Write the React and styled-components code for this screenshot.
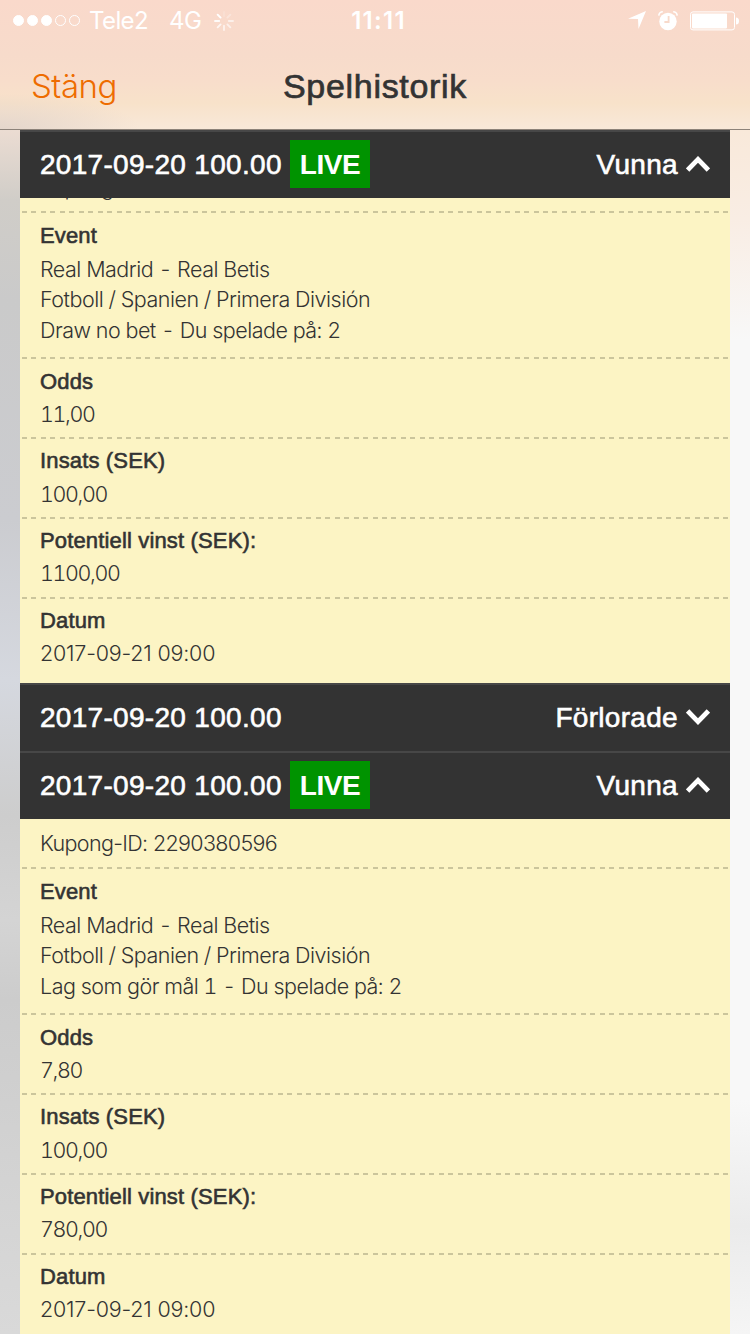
import React from 'react';
import styled, { createGlobalStyle } from 'styled-components';

const bets = [
  {
    id: 1,
    date: '2017-09-20',
    amount: '100.00',
    live: true,
    status: 'Vunna',
    open: true,
    scrolled: true,
    coupon: '2290380597',
    event: ['Real Madrid - Real Betis', 'Fotboll / Spanien / Primera División', 'Draw no bet - Du spelade på: 2'],
    odds: '11,00',
    stake: '100,00',
    win: '1100,00',
    placed: '2017-09-21 09:00',
  },
  {
    id: 2,
    date: '2017-09-20',
    amount: '100.00',
    live: false,
    status: 'Förlorade',
    open: false,
  },
  {
    id: 3,
    date: '2017-09-20',
    amount: '100.00',
    live: true,
    status: 'Vunna',
    open: true,
    coupon: '2290380596',
    event: ['Real Madrid - Real Betis', 'Fotboll / Spanien / Primera División', 'Lag som gör mål 1 - Du spelade på: 2'],
    odds: '7,80',
    stake: '100,00',
    win: '780,00',
    placed: '2017-09-21 09:00',
  },
];

function StatusIcons() {
  return (
    <Icons>
      <svg width="18" height="18" viewBox="0 0 18 18">
        <path d="M18 0 L10.5 18 L10 8 L0 7.8 Z" fill="#fff" />
      </svg>
      <svg width="20" height="20" viewBox="0 0 20 20">
        <circle cx="10" cy="10.5" r="8.7" fill="#fff" />
        <path d="M0.8 4.6 A4 4 0 0 1 4.8 0.8 M15.2 0.8 A4 4 0 0 1 19.2 4.6" stroke="#fff" strokeWidth="1.6" fill="none" />
        <path d="M10.6 5 V11 H6.4" stroke="#f8dacb" strokeWidth="1.8" fill="none" />
      </svg>
      <svg width="49" height="20" viewBox="0 0 49 20">
        <rect x="0.5" y="0.9" width="44" height="18" rx="2.5" stroke="#fff" fill="none" />
        <rect x="2" y="2.4" width="35" height="15" rx="0.8" fill="#fff" />
        <path d="M46 6.4 Q49 6.4 49 10 Q49 13.6 46 13.6 Z" fill="#fff" />
      </svg>
    </Icons>
  );
}

function Spinner() {
  const opacities = [0.15, 0.3, 0.6, 0.6, 0.65, 0.75, 0.9, 1];
  return (
    <svg width="20" height="20" viewBox="-10 -10 20 20">
      {opacities.map((opacity, i) => (
        <path
          key={i}
          d="M0 -4.8 V-9"
          stroke="#fff"
          strokeWidth="1.9"
          strokeLinecap="round"
          opacity={opacity}
          transform={`rotate(${i * 45})`}
        />
      ))}
    </svg>
  );
}

function Chevron({ up }) {
  return (
    <ChevronIcon width="24" height="16" viewBox="0 0 24 16">
      <path d={up ? 'M1.6 14 L12 3.4 L22.4 14' : 'M1.6 2 L12 12.6 L22.4 2'} stroke="#fff" strokeWidth="4.8" fill="none" />
    </ChevronIcon>
  );
}

function Field({ label, gap, children, ...rest }) {
  return (
    <Row {...rest}>
      <Label $gap={gap}>{label}</Label>
      {children}
    </Row>
  );
}

function Bet({ bet }) {
  return (
    <section>
      <BetHeader>
        <BetTitle>{bet.date} {bet.amount}</BetTitle>
        {bet.live && <Live>LIVE</Live>}
        <BetStatus>
          {bet.status}
          <Chevron up={bet.open} />
        </BetStatus>
      </BetHeader>
      {bet.open && (
        <Details>
          <Coupon $scrolled={bet.scrolled}>
            <CouponId>Kupong-ID: {bet.coupon}</CouponId>
          </Coupon>
          <Field label="Event" $height="146px" gap="2.5px">
            {bet.event.map(line => <Value key={line}>{line}</Value>)}
          </Field>
          <Field label="Odds"><Amount>{bet.odds}</Amount></Field>
          <Field label="Insats (SEK)" $top="7px" gap="4px"><Amount>{bet.stake}</Amount></Field>
          <Field label="Potentiell vinst (SEK):" $top="7px"><Amount>{bet.win}</Amount></Field>
          <Field label="Datum" $top="7px" $height="84px" $last><DateValue>{bet.placed}</DateValue></Field>
        </Details>
      )}
    </section>
  );
}

export default function App() {
  return (
    <Screen>
      <GlobalStyle />
      <TopBar>
        <StatusBar>
          <Carrier>
            <Dots>
              <Dot $full />
              <Dot $full />
              <Dot $full />
              <Dot />
              <Dot />
            </Dots>
            <Operator>Tele2</Operator>
            <Network>4G</Network>
            <Spinner />
          </Carrier>
          <Clock>11:11</Clock>
          <StatusIcons />
        </StatusBar>
        <NavBar>
          <CloseButton>Stäng</CloseButton>
          <Title>Spelhistorik</Title>
        </NavBar>
      </TopBar>
      <List>
        {bets.map(bet => <Bet key={bet.id} bet={bet} />)}
      </List>
    </Screen>
  );
}

const GlobalStyle = createGlobalStyle`
  * {
    box-sizing: border-box;
  }

  body {
    margin: 0;
    overflow: hidden;
  }

  svg {
    display: block;
    flex: none;
  }
`;

const Screen = styled.div`
  background:
    linear-gradient(180deg, #ebdcd2 130px, #d0cdc8 200px, #cacaca 300px, #cbccd0 520px, #d5d8df 680px, #cdcdcd 815px, #d4d4d4 920px, #cccccc 1000px, #d9d9d9 1334px) left / 375px 100% no-repeat,
    linear-gradient(180deg, #f9e9da 130px, #f9ede4 220px, #f8f8f8 340px, #f8f8f8 1100px, #ebebeb 1226px, #f5f5f5 1334px) right / 375px 100% no-repeat;
  color: #333;
  display: flex;
  flex-direction: column;
  font-family: 'Liberation Sans', Arial, sans-serif;
  height: 1334px;
  overflow: hidden;
  width: 750px;
`;

const TopBar = styled.header`
  background:
    radial-gradient(ellipse 140px 36px at 0 100%, rgba(226, 212, 202, 0.9), rgba(226, 212, 202, 0)),
    linear-gradient(180deg, #fad9cb 0, #f7dbcb 55px, #f8ddcb 80px, #f8e2ca 103px, #f8e8d9 129px);
  border-bottom: 1px solid #8c8279;
  flex: none;
  height: 130px;
`;

const StatusBar = styled.div`
  align-items: center;
  color: #fff;
  display: grid;
  font-family: Inter, sans-serif;
  font-size: 24px;
  grid-template-columns: 1fr auto 1fr;
  height: 41px;
  padding: 0 11px 0 13px;
`;

const Carrier = styled.div`
  align-items: center;
  display: flex;
`;

const Dots = styled.div`
  display: flex;
  gap: 3px;
  width: 76px;
`;

const Dot = styled.span`
  background: ${props => (props.$full ? '#fff' : 'transparent')};
  border: 1px solid #fff;
  border-radius: 50%;
  height: 11px;
  width: 11px;
`;

const Operator = styled.span`
  letter-spacing: -0.6px;
  width: 80px;
`;

const Network = styled.span`
  letter-spacing: -0.5px;
  width: 45px;
`;

const Clock = styled.span`
  font-kerning: none;
  font-weight: 600;
  letter-spacing: 1.3px;
  margin-left: 5px;
`;

const Icons = styled.div`
  display: flex;
  gap: 12px;
  justify-content: flex-end;
`;

const NavBar = styled.div`
  align-items: center;
  display: grid;
  font-size: 34px;
  grid-template-columns: 1fr auto 1fr;
  height: 88px;
  padding: 2px 31px 0;
`;

const CloseButton = styled.button`
  background: none;
  border: 0;
  color: #ee6c00;
  font: 300 33px Inter, sans-serif;
  justify-self: start;
  letter-spacing: -0.5px;
  padding: 0;
`;

const Title = styled.h1`
  -webkit-text-stroke: 0.7px #333;
  font-size: 34px;
  font-weight: 400;
  letter-spacing: 0.7px;
  margin: 0;
`;

const List = styled.main`
  flex: 1;
  margin: 0 20px;
  min-height: 0;
`;

const BetHeader = styled.div`
  align-items: center;
  background: #333;
  border-top: 2px solid #474747;
  color: #fff;
  display: flex;
  font-size: 28px;
  height: 68px;
  line-height: 48px;
  padding: 0 20px 2px;
`;

const BetTitle = styled.span`
  -webkit-text-stroke: 0.6px #fff;
  letter-spacing: 0.3px;
  padding-top: 1px;
  width: 250px;
`;

const Live = styled.span`
  background: #009300;
  font-weight: bold;
  height: 48px;
  letter-spacing: -0.4px;
  line-height: 50px;
  text-align: center;
  width: 80px;
`;

const BetStatus = styled.span`
  -webkit-text-stroke: 0.6px #fff;
  align-items: center;
  display: flex;
  gap: 8px;
  letter-spacing: 0.3px;
  margin-left: auto;
  padding-top: 1px;
`;

const ChevronIcon = styled.svg`
  margin-bottom: 2px;
`;

const Details = styled.div`
  background: #fcf4c4;
  overflow: hidden;
`;

const dashes = 'repeating-linear-gradient(90deg, #cbc59c 0 5px, transparent 5px 9.473px)';

const Row = styled.div`
  background: ${props => (props.$last ? 'none' : `${dashes} 2px 100% / 706px 2px no-repeat`)};
  height: ${props => props.$height || '80px'};
  padding: ${props => props.$top || '8px'} 20px 0;
`;

const Coupon = styled(Row)`
  height: 50px;
  margin-top: ${props => (props.$scrolled ? '-35px' : 0)};
  padding-top: 9px;
`;

const Label = styled.div`
  -webkit-text-stroke: 0.6px #333;
  font-size: 22px;
  letter-spacing: 0.15px;
  line-height: 30px;
  margin-bottom: ${props => props.$gap || '3px'};
`;

const Value = styled.div`
  font-family: Inter, sans-serif;
  font-size: 21.5px;
  font-variant-numeric: tabular-nums;
  font-weight: 300;
  letter-spacing: -0.5px;
  line-height: 30.5px;
`;

const CouponId = styled(Value)`
  font-variant-numeric: normal;
  letter-spacing: -0.65px;
`;

const Amount = styled(Value)`
  letter-spacing: -1.4px;
  line-height: 28.5px;
`;

const DateValue = styled(Value)`
  font-variant-numeric: normal;
  letter-spacing: -0.2px;
  line-height: 28.5px;
`;
